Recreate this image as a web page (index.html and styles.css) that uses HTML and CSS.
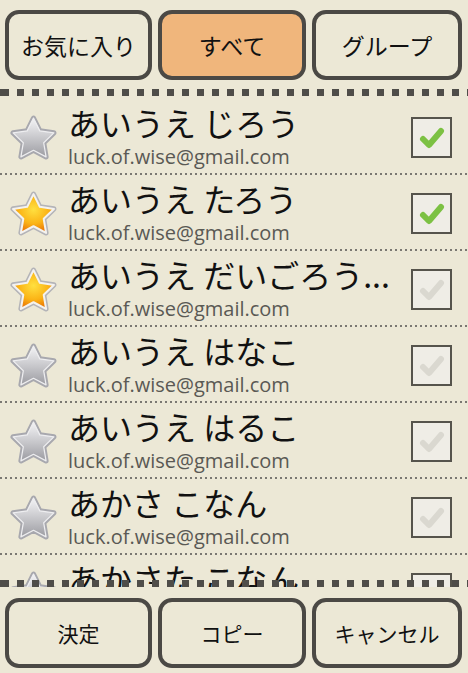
FILE: index.html
```html
<!DOCTYPE html>
<html lang="ja">
<head>
<meta charset="utf-8">
<title>連絡先</title>
<link rel="stylesheet" href="styles.css">
</head>
<body>
<svg width="0" height="0" class="defs" aria-hidden="true">
  <defs>
    <linearGradient id="silverFill" x1="0" y1="0" x2="0" y2="1">
      <stop offset="0" stop-color="#f4f4f6"/>
      <stop offset="0.55" stop-color="#c4c4c8"/>
      <stop offset="1" stop-color="#9c9ca2"/>
    </linearGradient>
    <radialGradient id="goldFill" cx="0.5" cy="0.4" r="0.6">
      <stop offset="0" stop-color="#ffe040"/>
      <stop offset="0.6" stop-color="#fbb416"/>
      <stop offset="1" stop-color="#ea7505"/>
    </radialGradient>
  </defs>
</svg>

<header class="bar top-bar">
  <button class="tab">お気に入り</button>
  <button class="tab active">すべて</button>
  <button class="tab">グループ</button>
</header>

<div class="list-wrap">
  <div class="sep sep-top"></div>
  <ul class="list">
    <li class="row">
      <svg class="star silver" viewBox="0 0 46 46"><polygon class="rim" points="23,4 29.2,16.5 43,18.5 33,28.2 35.3,42 23,35.5 10.7,42 13,28.2 3,18.5 16.8,16.5"/><polygon class="core" points="23,4 29.2,16.5 43,18.5 33,28.2 35.3,42 23,35.5 10.7,42 13,28.2 3,18.5 16.8,16.5"/></svg>
      <div class="info"><div class="name">あいうえ じろう</div><div class="mail">luck.of.wise@gmail.com</div></div>
      <span class="check on"><svg viewBox="0 0 37 37"><polyline points="10,20 16,26 28,12"/></svg></span>
    </li>
    <li class="row">
      <svg class="star gold" viewBox="0 0 46 46"><polygon class="rim" points="23,4 29.2,16.5 43,18.5 33,28.2 35.3,42 23,35.5 10.7,42 13,28.2 3,18.5 16.8,16.5"/><polygon class="core" points="23,4 29.2,16.5 43,18.5 33,28.2 35.3,42 23,35.5 10.7,42 13,28.2 3,18.5 16.8,16.5"/></svg>
      <div class="info"><div class="name">あいうえ たろう</div><div class="mail">luck.of.wise@gmail.com</div></div>
      <span class="check on"><svg viewBox="0 0 37 37"><polyline points="10,20 16,26 28,12"/></svg></span>
    </li>
    <li class="row">
      <svg class="star gold" viewBox="0 0 46 46"><polygon class="rim" points="23,4 29.2,16.5 43,18.5 33,28.2 35.3,42 23,35.5 10.7,42 13,28.2 3,18.5 16.8,16.5"/><polygon class="core" points="23,4 29.2,16.5 43,18.5 33,28.2 35.3,42 23,35.5 10.7,42 13,28.2 3,18.5 16.8,16.5"/></svg>
      <div class="info"><div class="name">あいうえ だいごろう...</div><div class="mail">luck.of.wise@gmail.com</div></div>
      <span class="check"><svg viewBox="0 0 37 37"><polyline points="10,20 16,26 28,12"/></svg></span>
    </li>
    <li class="row">
      <svg class="star silver" viewBox="0 0 46 46"><polygon class="rim" points="23,4 29.2,16.5 43,18.5 33,28.2 35.3,42 23,35.5 10.7,42 13,28.2 3,18.5 16.8,16.5"/><polygon class="core" points="23,4 29.2,16.5 43,18.5 33,28.2 35.3,42 23,35.5 10.7,42 13,28.2 3,18.5 16.8,16.5"/></svg>
      <div class="info"><div class="name">あいうえ はなこ</div><div class="mail">luck.of.wise@gmail.com</div></div>
      <span class="check"><svg viewBox="0 0 37 37"><polyline points="10,20 16,26 28,12"/></svg></span>
    </li>
    <li class="row">
      <svg class="star silver" viewBox="0 0 46 46"><polygon class="rim" points="23,4 29.2,16.5 43,18.5 33,28.2 35.3,42 23,35.5 10.7,42 13,28.2 3,18.5 16.8,16.5"/><polygon class="core" points="23,4 29.2,16.5 43,18.5 33,28.2 35.3,42 23,35.5 10.7,42 13,28.2 3,18.5 16.8,16.5"/></svg>
      <div class="info"><div class="name">あいうえ はるこ</div><div class="mail">luck.of.wise@gmail.com</div></div>
      <span class="check"><svg viewBox="0 0 37 37"><polyline points="10,20 16,26 28,12"/></svg></span>
    </li>
    <li class="row">
      <svg class="star silver" viewBox="0 0 46 46"><polygon class="rim" points="23,4 29.2,16.5 43,18.5 33,28.2 35.3,42 23,35.5 10.7,42 13,28.2 3,18.5 16.8,16.5"/><polygon class="core" points="23,4 29.2,16.5 43,18.5 33,28.2 35.3,42 23,35.5 10.7,42 13,28.2 3,18.5 16.8,16.5"/></svg>
      <div class="info"><div class="name">あかさ こなん</div><div class="mail">luck.of.wise@gmail.com</div></div>
      <span class="check"><svg viewBox="0 0 37 37"><polyline points="10,20 16,26 28,12"/></svg></span>
    </li>
    <li class="row">
      <svg class="star silver" viewBox="0 0 46 46"><polygon class="rim" points="23,4 29.2,16.5 43,18.5 33,28.2 35.3,42 23,35.5 10.7,42 13,28.2 3,18.5 16.8,16.5"/><polygon class="core" points="23,4 29.2,16.5 43,18.5 33,28.2 35.3,42 23,35.5 10.7,42 13,28.2 3,18.5 16.8,16.5"/></svg>
      <div class="info"><div class="name">あかさた こなん</div><div class="mail">luck.of.wise@gmail.com</div></div>
      <span class="check"><svg viewBox="0 0 37 37"><polyline points="10,20 16,26 28,12"/></svg></span>
    </li>
  </ul>
  <div class="sep sep-bottom"></div>
</div>

<footer class="bar bottom-bar">
  <button class="tab small">決定</button>
  <button class="tab small">コピー</button>
  <button class="tab small">キャンセル</button>
</footer>
</body>
</html>
```

FILE: styles.css
```css
* { box-sizing: border-box; }
html, body {
  margin: 0;
  padding: 0;
  width: 468px;
  height: 673px;
  overflow: hidden;
  background: #ece8d6;
  font-family: "Noto Sans CJK JP", "Noto Sans", sans-serif;
  color: #111;
}
.defs { position: absolute; }

.bar {
  display: grid;
  grid-template-columns: 147px 148px 150px;
  column-gap: 6px;
  padding: 0 5px 0 5px;
}
.top-bar { padding-top: 10px; height: 89px; }
.bottom-bar { padding-top: 11px; }

.tab {
  height: 70px;
  border: 4px solid #4b4945;
  border-radius: 14px;
  background: #ece8d6;
  font-family: "Noto Sans CJK JP", sans-serif;
  font-size: 23px;
  color: #111;
  padding: 0;
  display: flex;
  align-items: center;
  justify-content: center;
}
.tab.active { background: #f0b67c; }
.tab.small { font-size: 21px; }

.list-wrap {
  position: relative;
  height: 498px;
  overflow: hidden;
}
.sep {
  height: 7px;
  background: repeating-linear-gradient(90deg, #4f4d49 0 7px, transparent 7px 15px);
  background-position: 2px 0;
}
.sep-bottom {
  position: absolute;
  left: 0;
  right: 0;
  bottom: 0;
}

.list {
  list-style: none;
  margin: 0;
  padding: 3px 0 0 0;
}
.row {
  height: 76px;
  display: flex;
  align-items: center;
  padding: 0 16px 2px 10px;
  background: repeating-linear-gradient(90deg, #7a7872 0 2px, transparent 2px 5px) bottom left / 100% 2px no-repeat;
}
.star {
  width: 47px;
  height: 47px;
  flex: none;
  margin-top: 2px;
}
.star .rim {
  stroke-width: 5;
  stroke-linejoin: round;
}
.star .core {
  stroke-width: 1.2;
  stroke-linejoin: round;
}
.star.silver .rim { fill: #b6b6ba; stroke: #a8a8ae; }
.star.silver .core { fill: url(#silverFill); stroke: #eeeef0; }
.star.gold .rim { fill: #c0c0c4; stroke: #b4b4b8; }
.star.gold .core { fill: url(#goldFill); stroke: #f4f2ee; stroke-width: 2; }

.info {
  flex: 1;
  min-width: 0;
  margin-left: 11px;
}
.name {
  font-size: 32px;
  line-height: 40px;
  white-space: nowrap;
  color: #111;
}
.mail {
  font-family: "Open Sans", "Noto Sans", sans-serif;
  font-size: 20px;
  line-height: 26px;
  margin-top: 2px;
  color: #5a5954;
}

.check {
  width: 41px;
  height: 41px;
  flex: none;
  border: 2px solid #56544c;
  background: #efede6;
  display: flex;
  margin-top: 2px;
}
.check svg { width: 37px; height: 37px; }
.check polyline {
  fill: none;
  stroke: #dad8d0;
  stroke-width: 6;
  stroke-linecap: round;
  stroke-linejoin: round;
}
.check.on polyline { stroke: #7cc143; }
```
